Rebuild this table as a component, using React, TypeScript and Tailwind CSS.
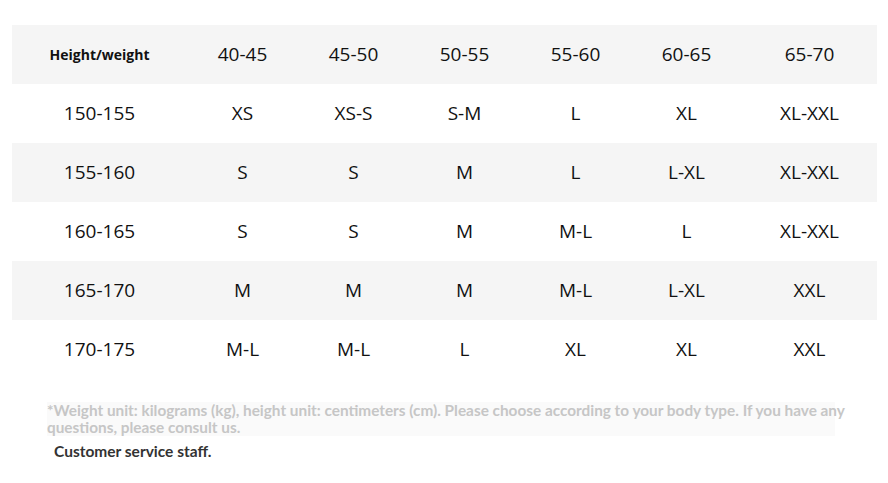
const headers = ["40-45", "45-50", "50-55", "55-60", "60-65", "65-70"];

const rows: { height: string; sizes: string[] }[] = [
  { height: "150-155", sizes: ["XS", "XS-S", "S-M", "L", "XL", "XL-XXL"] },
  { height: "155-160", sizes: ["S", "S", "M", "L", "L-XL", "XL-XXL"] },
  { height: "160-165", sizes: ["S", "S", "M", "M-L", "L", "XL-XXL"] },
  { height: "165-170", sizes: ["M", "M", "M", "M-L", "L-XL", "XXL"] },
  { height: "170-175", sizes: ["M-L", "M-L", "L", "XL", "XL", "XXL"] },
];

const colWidths = ["w-[111px]", "w-[111px]", "w-[111px]", "w-[111px]", "w-[111px]", "w-[135px]"];

export default function App() {
  return (
    <div className="h-[483px] w-[888px] bg-white pt-[25px] pl-[12px]">
      <div className="w-[865px] font-['Open_Sans',sans-serif] text-[19px] text-[#111]">
        <div className="flex h-[59px] items-center bg-[#f5f5f5]">
          <div className="w-[175px] text-center text-[14px] font-bold">Height/weight</div>
          {headers.map((h, i) => (
            <div key={h} className={`${colWidths[i]} text-center`}>
              {h}
            </div>
          ))}
        </div>
        {rows.map((row, r) => (
          <div
            key={row.height}
            className={`flex h-[59px] items-center ${r % 2 === 1 ? "bg-[#f5f5f5]" : "bg-white"}`}
          >
            <div className="w-[175px] text-center">{row.height}</div>
            {row.sizes.map((s, i) => (
              <div key={i} className={`${colWidths[i]} text-center`}>
                {s}
              </div>
            ))}
          </div>
        ))}
      </div>
      <div className="mt-[23px] pl-[35px] font-['Lato',sans-serif] font-bold">
        {/* faint panel stops a little short of the text's right edge */}
        <p className="w-[805px] bg-[linear-gradient(to_right,#fafafa_788px,transparent_788px)] text-[15.35px] leading-[17px] text-[#c6c6c6]">
          *Weight unit: kilograms (kg), height unit: centimeters (cm). Please choose according to your body type. If you have any questions, please consult us.
        </p>
        <p className="mt-[6px] pl-[7px] text-[15.5px] leading-[19px] text-[#333]">Customer service staff.</p>
      </div>
    </div>
  );
}
